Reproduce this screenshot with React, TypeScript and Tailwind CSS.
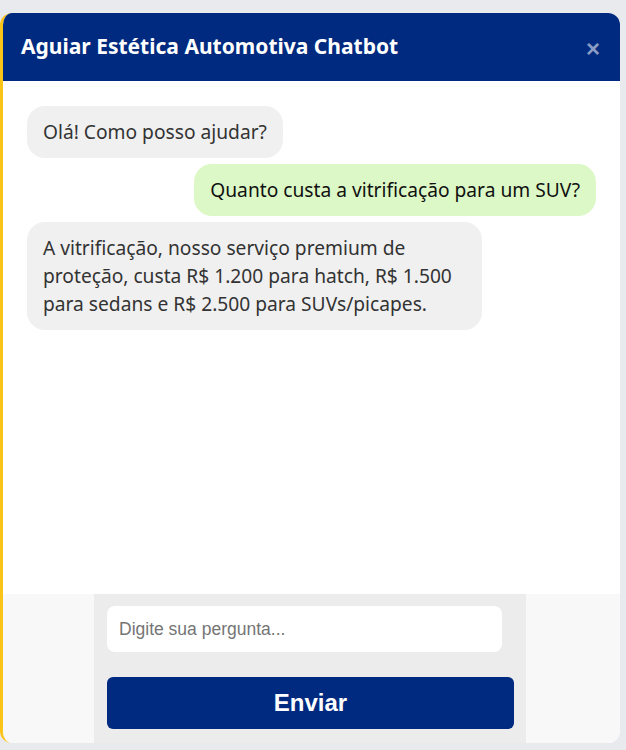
const messages = [
  { from: "bot", text: "Olá! Como posso ajudar?" },
  { from: "user", text: "Quanto custa a vitrificação para um SUV?" },
  {
    from: "bot",
    text: "A vitrificação, nosso serviço premium de proteção, custa R$ 1.200 para hatch, R$ 1.500 para sedans e R$ 2.500 para SUVs/picapes.",
  },
];

function Bubble({ from, text }: { from: string; text: string }) {
  const isUser = from === "user";
  return (
    <div className={isUser ? "flex justify-end" : "flex justify-start"}>
      <div
        className={
          isUser
            ? "max-w-[80%] rounded-[18px] bg-[#dcf8c6] px-4 py-3 text-[19.2px] leading-[28px] text-[#111]"
            : "max-w-[80%] rounded-[18px] bg-[#f0f0f0] px-4 py-3 text-[19.2px] leading-[28px] text-[#333]"
        }
      >
        {text}
      </div>
    </div>
  );
}

export default function App() {
  return (
    <div className="h-[750px] w-full bg-[#e9eaee] pt-[13px] font-['Noto_Sans',sans-serif]">
      <div className="flex h-[730px] w-[620px] flex-col overflow-hidden rounded-xl border-l-[3px] border-[#fcc419] bg-white">
        {/* header */}
        <div className="flex h-[68px] shrink-0 items-center justify-between bg-[#002a7f] pl-[18px] pr-5">
          <h1 className="text-[21px] font-bold text-white">Aguiar Estética Automotiva Chatbot</h1>
          <span className="mt-1 font-['Liberation_Sans',sans-serif] text-[24px] font-bold leading-none text-[#8a9cc4]">×</span>
        </div>

        {/* messages */}
        <div className="flex flex-1 flex-col gap-[6px] px-6 pt-[25px]">
          {messages.map((m, i) => (
            <Bubble key={i} from={m.from} text={m.text} />
          ))}
        </div>

        {/* form */}
        <div className="flex h-[149px] shrink-0 bg-[#f8f8f8] pl-[91px]">
          <div className="flex w-[432px] flex-col bg-[#ececec] pl-[13px] pr-3 pt-3 font-['Liberation_Sans',sans-serif]">
            <input
              className="h-[46px] w-[395px] rounded-lg bg-white px-3 text-[17.5px] text-[#333] outline-none placeholder:text-[#757575]"
              placeholder="Digite sua pergunta..."
            />
            <button className="mt-[25px] h-[52px] w-full rounded-md bg-[#002a7f] text-[24px] font-bold text-white">
              Enviar
            </button>
          </div>
        </div>
      </div>
    </div>
  );
}
